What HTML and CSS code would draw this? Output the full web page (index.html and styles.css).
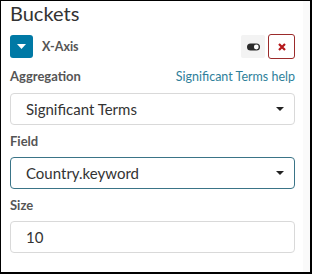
FILE: index.html
```html
<!DOCTYPE html>
<html lang="en">
<head>
    <meta charset="UTF-8">
    <title>Buckets</title>
    <link rel="stylesheet" href="styles.css">
</head>
<body>
    <div class="panel">
        <div class="content">
            <h2 class="title">Buckets</h2>

            <div class="agg-header">
                <button class="toggle-btn" type="button">
                    <svg width="9" height="5" viewBox="0 0 9 5"><path d="M0 0h9L4.5 5z" fill="#fff"/></svg>
                </button>
                <span class="agg-name">X-Axis</span>
                <span class="enable-btn">
                    <svg width="13" height="8" viewBox="0 0 13 8"><rect x="0" y="0.5" width="13" height="7" rx="3.5" fill="#2b2b2b"/><circle cx="9.3" cy="4" r="2.4" fill="#fff"/></svg>
                </span>
                <button class="remove-btn" type="button">
                    <svg width="8" height="8" viewBox="0 0 8 8"><path d="M1 1l6 6M7 1l-6 6" stroke="#b5171a" stroke-width="2.2"/></svg>
                </button>
            </div>

            <div class="group">
                <div class="label-row">
                    <label class="label">Aggregation</label>
                    <a class="help" href="#">Significant Terms help</a>
                </div>
                <div class="select">
                    <span>Significant Terms</span>
                    <span class="caret"></span>
                </div>
            </div>

            <div class="group">
                <div class="label-row">
                    <label class="label">Field</label>
                </div>
                <div class="select focused">
                    <span>Country.keyword</span>
                    <span class="caret"></span>
                </div>
            </div>

            <div class="group">
                <div class="label-row">
                    <label class="label">Size</label>
                </div>
                <div class="select">
                    <span>10</span>
                </div>
            </div>
        </div>
        <div class="track"></div>
    </div>
</body>
</html>
```

FILE: styles.css
```css
body {
    margin: 0;
    background: #fff;
    font-family: Lato, "Open Sans", sans-serif;
}
.panel {
    display: flex;
    width: 309px;
    height: 271px;
    border: 1px solid #000;
    border-right-width: 2px;
    border-bottom-width: 2px;
}
.content {
    width: 285px;
    padding: 0 8px 0 9px;
}
.track {
    width: 7px;
    background: #fafafa;
}
.title {
    margin: 0;
    font-size: 20px;
    font-weight: normal;
    line-height: 24px;
    color: #333;
}
.agg-header {
    display: flex;
    align-items: center;
    height: 25px;
    margin-top: 9px;
}
.toggle-btn {
    display: flex;
    align-items: center;
    justify-content: center;
    width: 23px;
    height: 23px;
    padding: 0;
    border: none;
    border-radius: 3px;
    background: #0079a5;
}
.agg-name {
    flex: 1;
    margin-left: 9px;
    font-size: 12.5px;
    font-weight: bold;
    color: #555;
}
.enable-btn {
    display: flex;
    align-items: center;
    justify-content: center;
    width: 24px;
    height: 23px;
    background: #f3f3f3;
    border-radius: 2px;
}
.remove-btn {
    display: flex;
    align-items: center;
    justify-content: center;
    width: 27px;
    height: 25px;
    margin-left: 3px;
    padding: 0;
    border: 1px solid #9b2b2b;
    border-radius: 3px;
    background: #fff;
}
.group {
    margin-top: 9px;
}
.group + .group {
    margin-top: 8px;
}
.label-row {
    display: flex;
    justify-content: space-between;
    align-items: baseline;
    line-height: 16px;
    margin-bottom: 8px;
}
.label {
    font-size: 13px;
    font-weight: bold;
    color: #555;
}
.help {
    font-size: 12.5px;
    color: #2f7f9b;
    text-decoration: none;
}
.select {
    display: flex;
    align-items: center;
    justify-content: space-between;
    height: 30px;
    padding: 0 10px 0 15px;
    border: 1px solid #d9d9d9;
    border-radius: 4px;
    font-size: 15px;
    color: #333;
}
.select.focused {
    border-color: #3a7487;
}
.caret {
    width: 0;
    height: 0;
    border-left: 4px solid transparent;
    border-right: 4px solid transparent;
    border-top: 4px solid #222;
}
```
